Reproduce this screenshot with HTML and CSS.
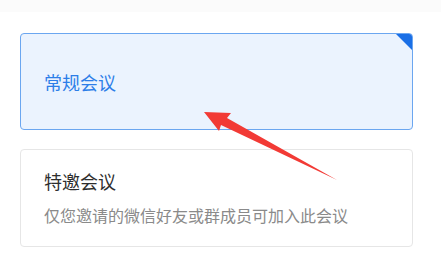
FILE: index.html
```html
<!DOCTYPE html>
<html lang="zh-CN">
<head>
    <meta charset="UTF-8">
    <meta name="viewport" content="width=device-width, initial-scale=1.0">
    <title>会议类型</title>
    <link rel="stylesheet" href="styles.css">
</head>
<body>
    <div class="topbar"></div>
    <div class="list">
        <div class="card active">
            <div class="title">常规会议</div>
            <span class="corner"></span>
        </div>
        <div class="card">
            <div class="title">特邀会议</div>
            <div class="desc">仅您邀请的微信好友或群成员可加入此会议</div>
        </div>
    </div>
    <svg class="arrow" width="441" height="256" viewBox="0 0 441 256">
        <polygon points="204,112 231,113 227,118 337,180 221,125 219,131" fill="#f23a35"/>
    </svg>
</body>
</html>
```

FILE: styles.css
```css
body { margin: 0; background: #fff; font-family: "Noto Sans CJK SC", "Noto Sans", sans-serif; position: relative; width: 441px; height: 256px; overflow: hidden; }
.topbar { height: 12px; background: #fbfbfb; }
.list { padding: 21px 28px 0 20px; display: flex; flex-direction: column; gap: 19px; }
.card { position: relative; box-sizing: border-box; border: 1px solid #e6e6e6; border-radius: 4px; padding: 19px 23px 0; height: 98px; background: #fff; overflow: hidden; }
.card.active { height: 97px; border: 1.5px solid #6ba6f0; background: #ebf3fe; display: flex; align-items: center; padding: 0 23px 0 23px; }
.title { font-size: 18px; line-height: 24px; color: #2e2e2e; }
.active .title { color: #2d7ee8; }
.desc { margin-top: 11px; font-size: 16px; line-height: 22px; color: #8a8a8a; }
.corner { position: absolute; top: 0; right: 0; width: 0; height: 0; border-top: 16px solid #1a6fe6; border-left: 16px solid transparent; }
.arrow { position: absolute; top: 0; left: 0; }
```
